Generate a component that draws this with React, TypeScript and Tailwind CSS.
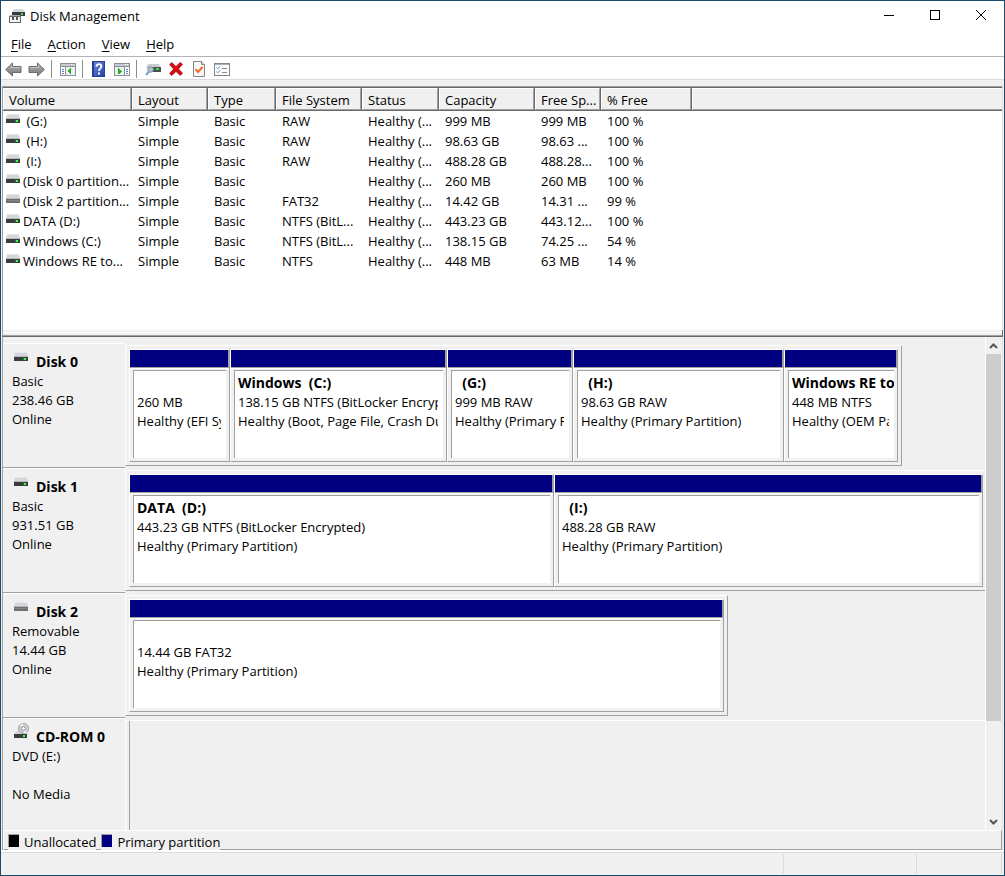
import type { ReactNode } from "react";

type VolumeRow = { name: string; removable?: boolean; cells: string[] };
type Partition = { title: string; size: string; status: string; weight: number };
type Disk = {
  name: string;
  kind: string;
  capacity: string;
  state: string;
  icon: "fixed" | "removable" | "cd";
  share: number;
  partitions: Partition[];
};

const NB = "\u00a0";

const columns = [
  { label: "Volume", width: "w-[129px]" },
  { label: "Layout", width: "w-[76px]" },
  { label: "Type", width: "w-[68px]" },
  { label: "File System", width: "w-[86px]" },
  { label: "Status", width: "w-[77px]" },
  { label: "Capacity", width: "w-[96px]" },
  { label: "Free Sp...", width: "w-[66px]" },
  { label: "% Free", width: "w-[91px]" },
];

const volumes: VolumeRow[] = [
  { name: NB + "(G:)", cells: ["Simple", "Basic", "RAW", "Healthy (...", "999 MB", "999 MB", "100 %"] },
  { name: NB + "(H:)", cells: ["Simple", "Basic", "RAW", "Healthy (...", "98.63 GB", "98.63 ...", "100 %"] },
  { name: NB + "(I:)", cells: ["Simple", "Basic", "RAW", "Healthy (...", "488.28 GB", "488.28...", "100 %"] },
  { name: "(Disk 0 partition...", cells: ["Simple", "Basic", "", "Healthy (...", "260 MB", "260 MB", "100 %"] },
  { name: "(Disk 2 partition...", removable: true, cells: ["Simple", "Basic", "FAT32", "Healthy (...", "14.42 GB", "14.31 ...", "99 %"] },
  { name: "DATA (D:)", cells: ["Simple", "Basic", "NTFS (BitL...", "Healthy (...", "443.23 GB", "443.12...", "100 %"] },
  { name: "Windows (C:)", cells: ["Simple", "Basic", "NTFS (BitL...", "Healthy (...", "138.15 GB", "74.25 ...", "54 %"] },
  { name: "Windows RE to...", cells: ["Simple", "Basic", "NTFS", "Healthy (...", "448 MB", "63 MB", "14 %"] },
];

const disks: Disk[] = [
  {
    name: "Disk 0", kind: "Basic", capacity: "238.46 GB", state: "Online", icon: "fixed", share: 90.35,
    partitions: [
      { title: "", size: "260 MB", status: "Healthy (EFI System Partition)", weight: 99 },
      { title: `Windows${NB} (C:)`, size: "138.15 GB NTFS (BitLocker Encrypted)", status: "Healthy (Boot, Page File, Crash Dump)", weight: 215 },
      { title: `${NB}${NB}(G:)`, size: "999 MB RAW", status: "Healthy (Primary Partition)", weight: 124 },
      { title: `${NB}${NB}(H:)`, size: "98.63 GB RAW", status: "Healthy (Primary Partition)", weight: 209 },
      { title: "Windows RE to", size: "448 MB NTFS", status: "Healthy (OEM Partition)", weight: 112 },
    ],
  },
  {
    name: "Disk 1", kind: "Basic", capacity: "931.51 GB", state: "Online", icon: "fixed", share: 100,
    partitions: [
      { title: `DATA${NB} (D:)`, size: "443.23 GB NTFS (BitLocker Encrypted)", status: "Healthy (Primary Partition)", weight: 423 },
      { title: `${NB}${NB}(I:)`, size: "488.28 GB RAW", status: "Healthy (Primary Partition)", weight: 427 },
    ],
  },
  {
    name: "Disk 2", kind: "Removable", capacity: "14.44 GB", state: "Online", icon: "removable", share: 70.12,
    partitions: [{ title: "", size: "14.44 GB FAT32", status: "Healthy (Primary Partition)", weight: 593 }],
  },
  { name: "CD-ROM 0", kind: "DVD (E:)", capacity: "", state: "No Media", icon: "cd", share: 100, partitions: [] },
];

function DriveIcon({ removable = false }: { removable?: boolean }) {
  return (
    <svg width="14" height="10" viewBox="0 0 14 10" className="shrink-0" aria-hidden="true">
      <path d="M1 0h12l1 5H0z" fill="#d3d6db" />
      <path d="M1 0h12l.4 1H.6z" fill="#e3e5e8" />
      <rect y="4" width="14" height="1" fill="#b5b8bc" />
      {removable ? (
        <>
          <rect y="5" width="14" height="4" fill="#6f6f6f" />
          <rect x="1" y="6" width="12" height="1" fill="#858585" />
        </>
      ) : (
        <>
          <rect y="5" width="14" height="4" fill="#3a3c3e" />
          <rect x="9" y="6" width="3" height="2" fill="#1f7a2a" />
          <rect x="10" y="6" width="2" height="2" fill="#3dfc4a" />
        </>
      )}
    </svg>
  );
}

function CdIcon() {
  return (
    <svg width="16" height="17" viewBox="0 0 16 17" aria-hidden="true">
      <path d="M2 8h10l2 4H0z" fill="#d3d6db" />
      <circle cx="9.5" cy="5.5" r="5" fill="#cfd1d3" stroke="#9b9ea1" />
      <path d="M9.5 5.500 6 2a5 5 0 0 1 3-1.500zM9.500 5.500l3.500 3.500a5 5 0 0 1-3 1.500z" fill="#eceeef" />
      <circle cx="9.5" cy="5.500" r="2" fill="#f6f6f6" stroke="#8d9093" />
      <rect x="0" y="11" width="13" height="4" fill="#3a3c3e" />
      <rect x="9" y="12" width="2" height="2" fill="#3dfc4a" />
    </svg>
  );
}

function AppIcon() {
  return (
    <svg width="16" height="16" viewBox="0 0 16 16" aria-hidden="true">
      <path d="M5 0h9l2 3H3z" fill="#d6d8da" />
      <rect x="3" y="3" width="13" height="4" fill="#393b3d" />
      <rect x="12" y="4" width="2" height="2" fill="#43e04c" />
      <path d="M0 7.500 1 6h10l1 1.500z" fill="#a7a9ab" />
      <rect x="0" y="7" width="12" height="7" fill="#66686a" />
      <rect x="1" y="8" width="10" height="5" fill="#f5f5f5" />
      <rect x="3" y="8" width="2" height="3" fill="#55585a" />
      <rect x="7" y="8" width="2" height="3" fill="#55585a" />
    </svg>
  );
}

function ArrowIcon({ forward = false }: { forward?: boolean }) {
  return (
    <svg width="17" height="15" viewBox="0 0 17 15" aria-hidden="true">
      <defs>
        <linearGradient id={forward ? "fwd" : "back"} x1="0" y1="0" x2="0" y2="1">
          <stop offset="0" stopColor="#b5b5b5" />
          <stop offset="1" stopColor="#757575" />
        </linearGradient>
      </defs>
      <path
        d={forward ? "M16.300 7.500 9.500 14V10.500H1V4.500H9.500V1z" : "M.7 7.500 7.500 14V10.500H16V4.500H7.500V1z"}
        fill={forward ? "url(#fwd)" : "url(#back)"}
        stroke="#6b6b6b"
        strokeLinejoin="round"
      />
      <path d={forward ? "M2 5.500h8.500V3.500" : "M15 5.500H6.500V3.800"} fill="none" stroke="#cfcfcf" strokeWidth=".8" />
    </svg>
  );
}

function PaneIcon({ flipped = false }: { flipped?: boolean }) {
  return (
    <svg width="16" height="13" viewBox="0 0 16 13" shapeRendering="crispEdges" aria-hidden="true">
      <rect width="16" height="13" fill="#8b9096" />
      <rect x="1" y="1" width="14" height="2" fill="#c5cad0" />
      <rect x="11" y="1" width="1" height="1" fill="#fff" />
      <rect x="13" y="1" width="1" height="1" fill="#fff" />
      <rect x="1" y="4" width="14" height="8" fill="#fff" />
      {flipped ? (
        <>
          <rect x="1" y="4" width="9" height="8" fill="#edf0f2" />
          <rect x="10" y="4" width="1" height="8" fill="#8b9096" />
          <path d="M12 6h2v1h-2zM12 8h2v1h-2zM12 10h2v1h-2z" fill="#4a84c4" />
          <path d="M4 5h1v1h1v1h1v1h1v1H7v1H6v1H4z" fill="#2eb01e" />
        </>
      ) : (
        <>
          <rect x="6" y="4" width="9" height="8" fill="#edf0f2" />
          <rect x="5" y="4" width="1" height="8" fill="#8b9096" />
          <path d="M2 6h2v1H2zM2 8h2v1H2zM2 10h2v1H2z" fill="#4a84c4" />
          <path d="M11 5v6h-1v-1H9V9H8V8h0V7h1V6h1V5z" fill="#2eb01e" />
        </>
      )}
    </svg>
  );
}

function HelpIcon() {
  return (
    <svg width="13" height="16" viewBox="0 0 13 16" aria-hidden="true">
      <defs>
        <linearGradient id="help" x1="0" y1="0" x2="1" y2="1">
          <stop offset="0" stopColor="#6a86dd" />
          <stop offset="1" stopColor="#2545ad" />
        </linearGradient>
      </defs>
      <rect width="13" height="16" fill="#2a3f8e" />
      <rect x="1" y="1" width="11" height="14" fill="url(#help)" />
      <rect x="1" y="1" width="1" height="14" fill="#26399a" />
      <path d="M4.500 5.800C4.500 2.300 9.600 2.500 9.400 5.500 9.300 7.300 7 7.600 7 10" fill="none" stroke="#fff" strokeWidth="1.800" />
      <rect x="6" y="11.500" width="2" height="2" fill="#fff" />
    </svg>
  );
}

function RescanIcon() {
  return (
    <svg width="16" height="13" viewBox="0 0 16 13" aria-hidden="true">
      <path d="M3 1h11l2 4H1z" fill="#c9ccd0" />
      <path d="M3 4h13v5H3z" fill="#4a4d50" />
      <rect x="11" y="5" width="3" height="2" fill="#39e544" />
      <circle cx="5.500" cy="6.500" r="2.800" fill="#a9c0cf" stroke="#8d979f" />
      <path d="M4 8.500 1 12" stroke="#71a8cf" strokeWidth="2" />
    </svg>
  );
}

function DeleteIcon() {
  return (
    <svg width="14" height="14" viewBox="0 0 14 14" aria-hidden="true">
      <path d="M.6 2.600 2.800.6 7 4.600 11 .6l2.400 1.600L9.500 7l4 4.200-2.200 2.200L7 9.400l-4.200 4-2.200-1.800L4.600 7z" fill="#d90b14" stroke="#a9060c" strokeWidth=".8" />
    </svg>
  );
}

function PropertiesIcon() {
  return (
    <svg width="12" height="16" viewBox="0 0 12 16" aria-hidden="true">
      <path d="M.5.5H8.500L11.500 3.500V15.500H.5z" fill="#f8f8f8" stroke="#858585" />
      <path d="M8.500.5V3.500H11.500" fill="#d9d9d9" stroke="#858585" />
      <path d="M2.500 8.200 5 11 9.500 6" fill="none" stroke="#ee6a24" strokeWidth="2" />
    </svg>
  );
}

function ListIcon() {
  return (
    <svg width="16" height="13" viewBox="0 0 16 13" aria-hidden="true">
      <rect x=".5" y=".5" width="15" height="12" fill="#fbfbfb" stroke="#80868c" />
      <rect x="1" y="1" width="14" height="1" fill="#a9b0b7" />
      <path d="M2.500 4.500 3.700 5.800 6 3.400M2.500 8.500 3.700 9.800 6 7.400" fill="none" stroke="#4a93d6" />
      <path d="M8 5.500h5M8 9.500h5" stroke="#8d8d8d" />
    </svg>
  );
}

function ToolButton({ label, children }: { label: string; children: ReactNode }) {
  return (
    <button type="button" aria-label={label} className="flex h-[22px] w-[23px] items-center justify-center">
      {children}
    </button>
  );
}

function ToolSeparator() {
  return <div className="mr-1 ml-[3px] h-[18px] w-px bg-[#8d8d8d]" />;
}

function MenuItem({ label }: { label: string }) {
  return (
    <button type="button" className="h-[20px] px-2">
      <span className="underline underline-offset-2">{label[0]}</span>
      {label.slice(1)}
    </button>
  );
}

function PartitionBox({ partition }: { partition: Partition }) {
  return (
    <div
      className="flex min-w-0 basis-0 flex-col border-t border-r border-b border-l border-t-white border-r-[#a0a0a0] border-b-[#a0a0a0] border-l-white"
      style={{ flexGrow: partition.weight }}
    >
      <div className="h-[18px] border-r border-b border-[#a0a0a0] bg-[#000080]" />
      <div className="flex grow flex-col border-t border-white px-[3px] pt-px pb-[3px]">
        <div className="grow border-t border-l border-[#a0a0a0] bg-white pt-[3px] pl-[3px] leading-[19px] whitespace-nowrap">
          <p className="h-[19px] overflow-hidden text-[14px] leading-[18px] font-bold">{partition.title}</p>
          <div className="mr-[5px] overflow-hidden">
            <p>{partition.size}</p>
            <p>{partition.status}</p>
          </div>
        </div>
      </div>
    </div>
  );
}

function DiskRow({ disk }: { disk: Disk }) {
  const empty = disk.partitions.length === 0;
  return (
    <section className="flex h-[125px] shrink-0" aria-label={disk.name}>
      <div className="w-[122px] shrink-0 border-t border-b border-t-white border-b-[#a0a0a0] pt-[8px] pl-[9px] leading-[19px]">
        <div className="flex h-[20px]">
          <div className={disk.icon === "cd" ? "-mt-[4px] w-[24px] pl-[2px]" : "w-[24px] pl-[2px]"}>
            {disk.icon === "cd" ? <CdIcon /> : <DriveIcon removable={disk.icon === "removable"} />}
          </div>
          <h2 className="text-[14px] font-bold">{disk.name}</h2>
        </div>
        <p>{disk.kind}</p>
        <p className="h-[19px]">{disk.capacity}</p>
        <p>{disk.state}</p>
      </div>
      {empty ? (
        <div className="mt-[2px] grow border-t border-l border-white pl-[3px]">
          <div className="h-full border-l border-[#a0a0a0]" />
        </div>
      ) : (
        <div className="min-w-0 grow py-[2px]">
          <div
            className={
              disk.share < 100
                ? "flex h-full border border-t-white border-r-[#a0a0a0] border-b-[#a0a0a0] border-l-white p-[3px]"
                : "flex h-full border-t border-b border-l border-t-white border-b-[#a0a0a0] border-l-white py-[3px] pr-[2px] pl-[3px]"
            }
            style={{ width: `${disk.share}%` }}
          >
            {disk.partitions.map((p, i) => (
              <PartitionBox key={i} partition={p} />
            ))}
          </div>
        </div>
      )}
    </section>
  );
}

function LegendItem({ label, swatch }: { label: string; swatch: string }) {
  return (
    <div className="flex h-[19px] items-center gap-[5px] bg-[#f0f0f0] pt-[2px]">
      <span className={`-mt-[5px] h-[13px] w-[11px] border-t border-l border-[#a0a0a0] ${swatch}`} />
      {label}
    </div>
  );
}

export default function App() {
  return (
    <div className="flex h-screen flex-col border border-[#1b4a6b] bg-white font-['Open_Sans','Noto_Sans',sans-serif] text-[13px] text-black">
      <header className="flex h-[31px] shrink-0 items-center">
        <div className="flex grow items-center gap-[5px] pl-[8px]">
          <AppIcon />
          <h1>Disk Management</h1>
        </div>
        <button type="button" aria-label="Minimize" className="flex h-full w-[46px] items-center justify-center pb-[3px]">
          <svg width="10" height="10" aria-hidden="true"><path d="M0 5.500h10" stroke="#000" /></svg>
        </button>
        <button type="button" aria-label="Maximize" className="flex h-full w-[46px] items-center justify-center pb-[3px]">
          <svg width="10" height="10" aria-hidden="true"><rect x=".5" y=".5" width="9" height="9" fill="none" stroke="#000" /></svg>
        </button>
        <button type="button" aria-label="Close" className="flex h-full w-[46px] items-center justify-center pb-[3px]">
          <svg width="10" height="10" aria-hidden="true"><path d="M0 0l10 10M10 0L0 10" stroke="#000" /></svg>
        </button>
      </header>

      <nav className="flex h-[24px] shrink-0 items-center pt-[2px] pl-[2px]" aria-label="Menu bar">
        {["File", "Action", "View", "Help"].map((m) => (
          <MenuItem key={m} label={m} />
        ))}
      </nav>

      <div role="toolbar" className="flex h-[24px] shrink-0 items-center border-t border-b border-t-[#b4b4b4] border-b-[#dadada] pt-[2px] pl-px">
        <ToolButton label="Back"><ArrowIcon /></ToolButton>
        <ToolButton label="Forward"><ArrowIcon forward /></ToolButton>
        <ToolSeparator />
        <ToolButton label="Show or hide console tree"><PaneIcon /></ToolButton>
        <ToolSeparator />
        <ToolButton label="Help"><HelpIcon /></ToolButton>
        <ToolButton label="Show or hide action pane"><PaneIcon flipped /></ToolButton>
        <ToolSeparator />
        <ToolButton label="Rescan disks"><RescanIcon /></ToolButton>
        <ToolButton label="Delete"><DeleteIcon /></ToolButton>
        <ToolButton label="Properties"><PropertiesIcon /></ToolButton>
        <ToolButton label="Settings"><ListIcon /></ToolButton>
      </div>

      <main className="flex min-h-0 grow flex-col bg-[#f0f0f0] pt-[6px] pl-px">
        <div className="mr-px shrink-0 border-t border-r border-l border-t-[#a0a0a0] border-r-[#e3e3e3] border-l-[#a0a0a0]">
          <div className="border-t border-[#696969] bg-white pb-[59px]">
            <table className="w-full table-fixed border-separate border-spacing-0 text-left">
              <thead>
                <tr>
                  {columns.map((c) => (
                    <th key={c.label} className={`${c.width} h-[23px] border-b border-[#696969] bg-[#f0f0f0] p-0 font-normal`}>
                      <div className="h-[22px] border-r border-[#696969]">
                        <div className="h-[22px] border border-t-white border-r-[#a0a0a0] border-b-[#a0a0a0] border-l-white pl-[5px] leading-[22px] whitespace-nowrap">
                          {c.label}
                        </div>
                      </div>
                    </th>
                  ))}
                  <td className="border-b border-[#696969] bg-[#f0f0f0] p-0">
                    <div className="h-[22px] border-t border-b border-l border-t-white border-b-[#a0a0a0] border-l-white" />
                  </td>
                </tr>
              </thead>
              <tbody>
                {volumes.map((v) => (
                  <tr key={v.name} className="h-[20px] leading-[20px] whitespace-nowrap">
                    <td className="p-0 pl-[3px]">
                      <div className="flex gap-[3px]">
                        <div className="pt-[3px]"><DriveIcon removable={v.removable} /></div>
                        <span>{v.name}</span>
                      </div>
                    </td>
                    {v.cells.map((cell, i) => (
                      <td key={i} className="p-0 pl-[6px]">{cell}</td>
                    ))}
                    <td className="p-0" />
                  </tr>
                ))}
              </tbody>
            </table>
          </div>
        </div>
        <div className="mr-px h-[7px] shrink-0 border-r border-b border-l border-r-[#696969] border-b-[#696969] border-l-[#a0a0a0] pt-[2px]">
          <div className="h-[4px] border-t border-b border-t-white border-b-[#a0a0a0]" />
        </div>

        <div className="mr-px flex min-h-0 grow flex-col border-r border-l border-r-[#e3e3e3] border-l-[#a0a0a0]">
          <div className="flex min-h-0 grow">
            <div className="flex min-w-0 grow basis-0 flex-col overflow-hidden border-r border-white pt-[6px]">
              {disks.map((d) => (
                <DiskRow key={d.name} disk={d} />
              ))}
            </div>
            <div className="flex w-[16px] shrink-0 flex-col pr-px">
              <button type="button" aria-label="Scroll up" className="flex h-[17px] shrink-0 items-center justify-center">
                <svg width="9" height="6" aria-hidden="true"><path d="M1 5l3.500-3.500L8 5" fill="none" stroke="#555" strokeWidth="2" /></svg>
              </button>
              <div className="min-h-0 grow basis-0">
                <div className="h-[80%] bg-[#cdcdcd]" />
              </div>
              <button type="button" aria-label="Scroll down" className="flex h-[17px] shrink-0 items-center justify-center">
                <svg width="9" height="6" aria-hidden="true"><path d="M1 1l3.500 3.500L8 1" fill="none" stroke="#555" strokeWidth="2" /></svg>
              </button>
            </div>
          </div>
          <div className="flex h-[20px] shrink-0 gap-[5px] border border-t-white border-r-[#a0a0a0] border-b-[#a0a0a0] border-l-white pt-px pl-[4px]">
            <LegendItem label="Unallocated" swatch="bg-black" />
            <LegendItem label="Primary partition" swatch="bg-[#000080]" />
          </div>
        </div>
      </main>

      <footer className="shrink-0 border-t-2 border-white bg-[#f0f0f0]">
        <div className="flex h-[23px] border-t border-[#dadada] py-px pr-[2px]">
          <div className="grow border-r border-[#dadada]" />
          <div className="w-[133px] border-r border-[#dadada]" />
          <div className="w-[85px] border-r border-[#dadada]" />
        </div>
      </footer>
    </div>
  );
}
